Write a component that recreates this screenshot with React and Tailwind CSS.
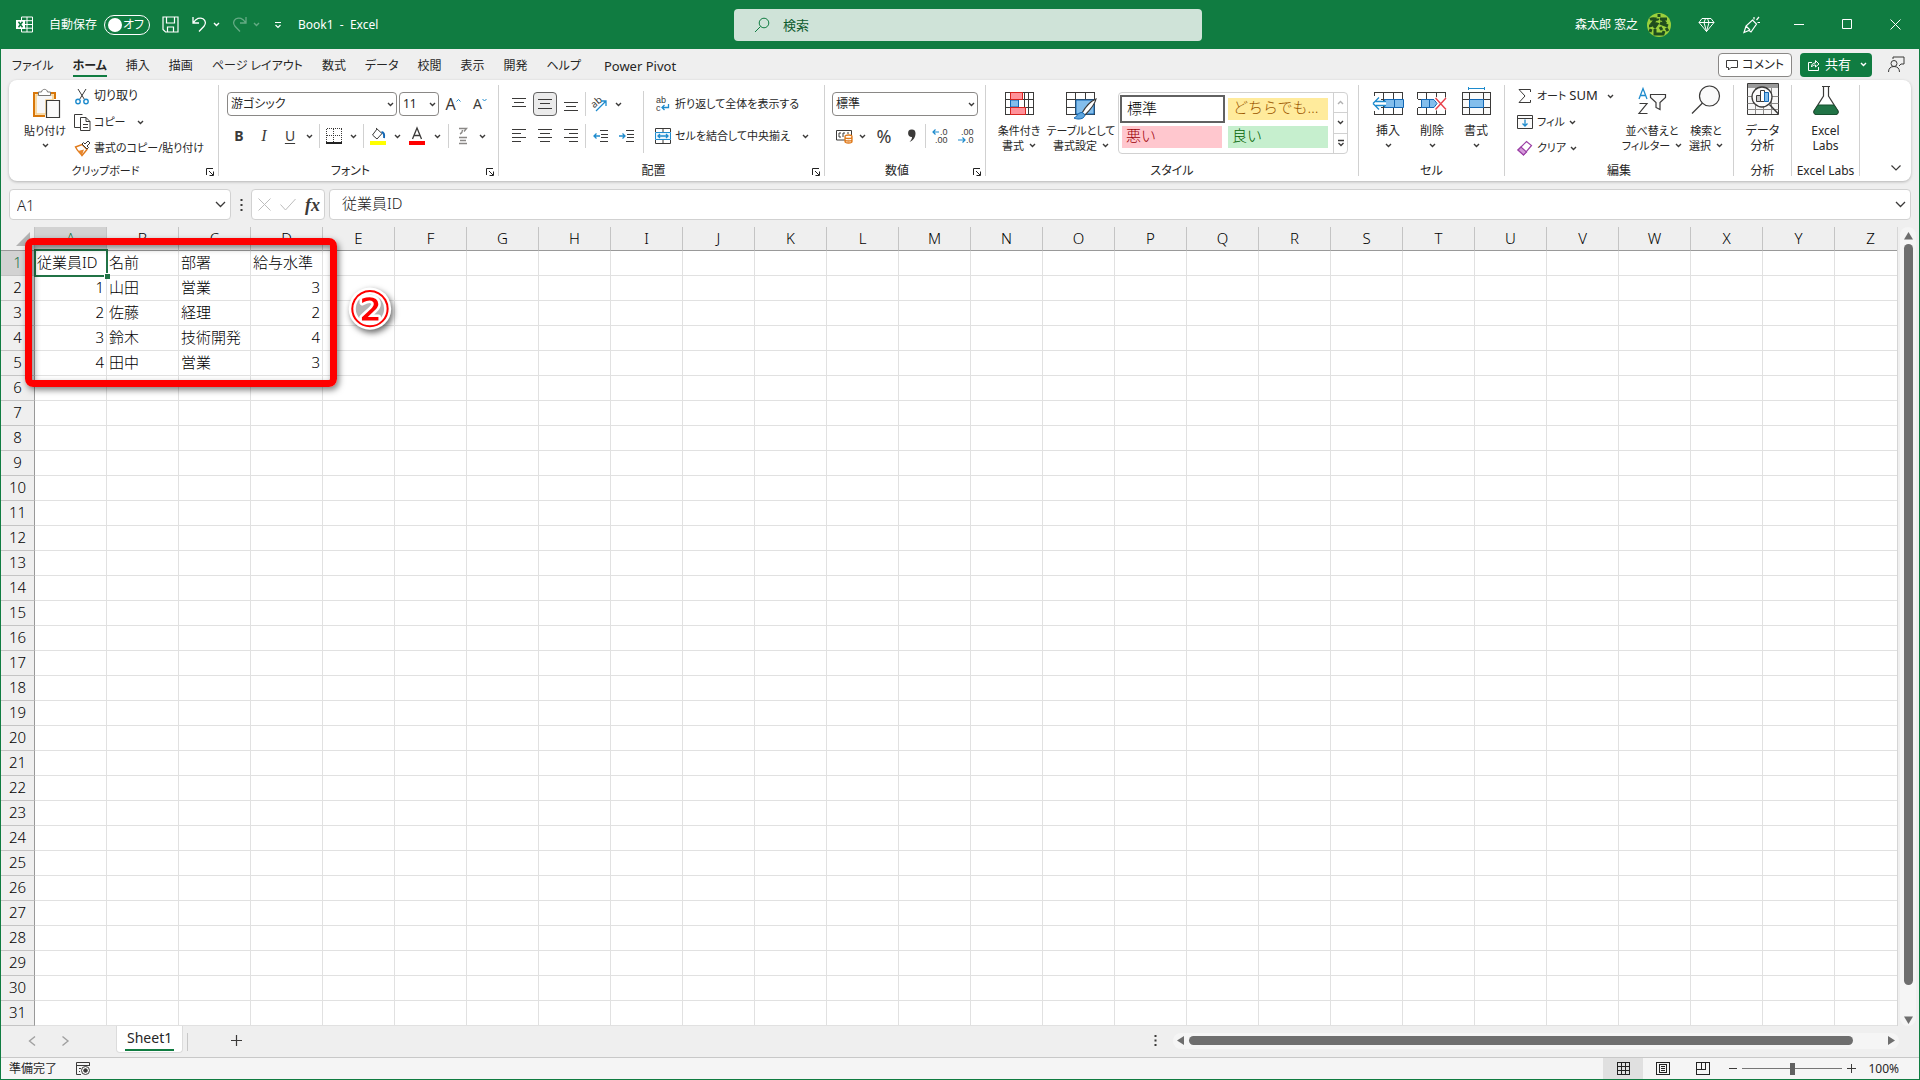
import React, { useState } from 'react';

const menuTabs = ['ファイル', 'ホーム', '挿入', '描画', 'ページ レイアウト', '数式', 'データ', '校閲', '表示', '開発', 'ヘルプ', 'Power Pivot'];

const columns = 'ABCDEFGHIJKLMNOPQRSTUVWXYZ'.split('');
const rows = Array.from({ length: 31 }, (_, i) => i + 1);

const sheet = [
  ['従業員ID', '名前', '部署', '給与水準'],
  [1, '山田', '営業', 3],
  [2, '佐藤', '経理', 2],
  [3, '鈴木', '技術開発', 4],
  [4, '田中', '営業', 3],
];

const BLUE = '#1e8bcd';
const INK = '#3b3a39';

function Icon({ w = 16, h = 16, children, className = '' }) {
  return (
    <svg width={w} height={h} viewBox={`0 0 ${w} ${h}`} fill="none" stroke={INK} className={`shrink-0 overflow-visible ${className}`} aria-hidden="true">
      {children}
    </svg>
  );
}

function Chevron({ className = '', color = INK }) {
  return (
    <svg width="7" height="5" viewBox="0 0 7 5" fill="none" stroke={color} strokeWidth="1.4" className={`shrink-0 ${className}`} aria-hidden="true">
      <path d="M1 1l2.5 2.5L6 1" />
    </svg>
  );
}

/* ---------- title bar ---------- */

function TitleBar() {
  const [autoSave, setAutoSave] = useState(false);

  return (
    <header className="grid grid-cols-[1fr_468px_1fr] items-center h-[49px] pl-4 bg-[#107c41] text-white text-xs">
      <div className="flex items-center">
        <Icon w={17} h={17}>
          <path d="M5.5 1h11v15h-11zM5.500 4.700h11M5.500 8.500h11M5.500 12.200h11M11 1v15" stroke="#fff" />
          <path d="M0 4h9v9H0z" fill="#fff" stroke="none" />
          <path d="M2.500 5.800l4 5.400M6.500 5.800l-4 5.400" stroke="#107c41" strokeWidth="1.500" />
        </Icon>
        <label className="relative flex items-center ml-4 gap-[7px]">
          自動保存
          <input type="checkbox" className="sr-only" checked={autoSave} onChange={() => setAutoSave(!autoSave)} />
          <span className="flex items-center justify-between w-[46px] h-5 pl-[3px] pr-[5px] rounded-full border border-white">
            <span className="w-[14px] h-[14px] rounded-full bg-white" />
            <span>オフ</span>
          </span>
        </label>
        <button aria-label="上書き保存" className="ml-3">
          <Icon w={17} h={17}><path d="M1 1h15v15H3.500L1 13.500zM4.500 1v6h8V1M5.500 16v-5h6v5" stroke="#fff" strokeWidth="1.200" /></Icon>
        </button>
        <button aria-label="元に戻す" className="flex items-center gap-[5px] ml-3">
          <Icon w={17} h={17}><path d="M2 1v6h6M2.500 6.500C5 2.500 9 1 12 2.800c3 2 3 5.200 1 7.400L8 15.500" stroke="#fff" strokeWidth="1.300" /></Icon>
          <Chevron color="#fff" />
        </button>
        <button aria-label="やり直し" className="flex items-center gap-[5px] ml-[11px] opacity-35">
          <Icon w={17} h={17}><path d="M15 1v6H9M14.500 6.500C12 2.500 8 1 5 2.800c-3 2-3 5.200-1 7.400l5 5.300" stroke="#fff" strokeWidth="1.300" /></Icon>
          <Chevron color="#fff" />
        </button>
        <button aria-label="クイック アクセス ツール バーのカスタマイズ" className="ml-[14px]">
          <Icon w={8} h={8}><path d="M1 1.500h6M1.500 4L4 6.500 6.500 4" stroke="#fff" strokeWidth="1.200" /></Icon>
        </button>
        <h1 className="ml-4 pt-px whitespace-pre">Book1  -  Excel</h1>
      </div>

      <label className="flex items-center h-8 rounded bg-[#cfe3d8] text-[#0e5c2f]">
        <Icon w={16} h={16} className="ml-5">
          <circle cx="10" cy="6" r="4.800" stroke="#107c41" />
          <path d="M6.500 9.500L1 15" stroke="#107c41" />
        </Icon>
        <input type="search" placeholder="検索" aria-label="検索" className="flex-1 ml-[13px] h-full outline-none text-[13px] placeholder:text-[#0e5c2f]" />
      </label>

      <div className="flex items-center justify-end pr-px">
        <button className="flex items-center gap-[9px]">
          森太郎 窓之
          <svg width="24" height="24" viewBox="0 0 24 24" aria-hidden="true">
            <circle cx="12" cy="12" r="12" fill="#9bd03c" />
            <g stroke="#1f4d1d" strokeWidth="3" fill="none">
              <path d="M12 1v3M3 6.500c4-2 8 1 8-1M9 6l-5 6M13 6h7M15 6l4 5M2 13c4 0 5-3 8-2l-3 4M13 10l8 3M4 16l-1 3M8 16v5h8l1-3M13 14l2 3M19 15l2 3" />
            </g>
          </svg>
        </button>
        <button aria-label="プレミアム" className="flex justify-center w-[46px] ml-3">
          <Icon w={17} h={16}><path d="M4 1.500h9l3 4-7.500 9-7.500-9zM1 5.500h15M6 5.500l2.500 9 2.500-9M6 5.500L7.500 1.500M11 5.500L9.500 1.500" stroke="#fff" /></Icon>
        </button>
        <button aria-label="ペン" className="flex justify-center w-[46px]">
          <Icon w={18} h={18}><path d="M1 16.500L3 10l6.500-6 4 4L8 16l-2-1.500zM3 10l4 4M11 3.500V1M13.500 4L16 1M14.500 6.500h2.500" stroke="#fff" strokeWidth="1.200" /></Icon>
        </button>
        <button aria-label="最小化" className="flex justify-center w-12"><Icon w={11} h={11}><path d="M0 5.500h10" stroke="#fff" /></Icon></button>
        <button aria-label="最大化" className="flex justify-center w-12"><Icon w={11} h={11}><path d="M.5.500h9v9h-9z" stroke="#fff" /></Icon></button>
        <button aria-label="閉じる" className="flex justify-center w-12"><Icon w={11} h={11}><path d="M.5.500l10 10M10.500.500l-10 10" stroke="#fff" /></Icon></button>
      </div>
    </header>
  );
}

/* ---------- menu tabs ---------- */

function MenuBar() {
  const [active, setActive] = useState('ホーム');

  return (
    <div className="flex items-center justify-between h-[31px] pl-[11px] pr-[14px] text-xs">
      <nav className="flex items-center gap-[19px]">
        {menuTabs.map((tab) => (
          <button
            key={tab}
            onClick={() => setActive(tab)}
            className={`h-6 pt-1 border-b-2 leading-[18px] whitespace-nowrap last:ml-1 last:text-[13px] ${active === tab ? 'border-[#107c41] font-bold' : 'border-transparent'}`}
          >
            {tab}
          </button>
        ))}
      </nav>
      <div className="flex items-center">
        <button className="flex items-center gap-1 h-6 px-[7px] rounded border border-[#8a8886] bg-white">
          <Icon w={12} h={12}><path d="M.5 1.500h11v7H5l-2.500 2.500V8.500h-2z" /></Icon>
          コメント
        </button>
        <button className="flex items-center gap-[5px] h-6 ml-2 pl-2 pr-[5px] rounded bg-[#107c41] text-white text-[13px]">
          <Icon w={12} h={12}><path d="M4 3.500H.5v8h10V8M3.500 8c0-3 1.500-4 4-4V1.500L11 5 7.500 8V6c-2 0-3 .5-4 2z" stroke="#fff" /></Icon>
          共有
          <Chevron color="#fff" className="ml-1" />
        </button>
        <button aria-label="フィードバック" className="ml-4">
          <Icon w={17} h={17}><circle cx="6" cy="7.500" r="3" /><path d="M.500 16c0-3.500 2-5.500 5.500-5.500S11.500 12.500 11.500 16M5 3V1h11v7h-3l-2 2" /></Icon>
        </button>
      </div>
    </div>
  );
}

/* ---------- ribbon ---------- */

function Group({ label, launcher, className, labelClass = '', children }) {
  return (
    <>
      <section className={`flex flex-col pt-[3px] shrink-0 ${className}`}>
        <div className="flex h-[78px]">{children}</div>
        <div className="flex items-center h-[18px]">
          <span className={`flex-1 pt-0.5 text-center whitespace-nowrap ${labelClass}`}>{label}</span>
          {launcher && (
            <button aria-label={`${label}の設定`} className="w-4 flex items-center justify-center pt-1">
              <Icon w={8} h={8}><path d="M.5 7V.5H7M3 3l4 4M7.500 3.500v4h-4" stroke="#222" /></Icon>
            </button>
          )}
        </div>
      </section>
      <div className="w-px my-[5px] bg-[#d1d1d1]" />
    </>
  );
}

function BigButton({ icon, lines, className = '' }) {
  return (
    <button className={`flex flex-col items-center justify-start shrink-0 leading-[15px] whitespace-nowrap ${className}`}>
      <span className="flex items-end h-9 pb-1 mb-1">{icon}</span>
      {lines.map((line, i) => (
        <span key={i} className="flex items-center justify-center gap-[5px] h-[15px]">{line}</span>
      ))}
    </button>
  );
}

function Tool({ label, children, className = 'w-6', pressed }) {
  return (
    <button
      aria-label={label}
      className={`flex items-center justify-center h-6 shrink-0 ${className} ${pressed ? 'rounded border border-[#616161] bg-[#ebebeb]' : ''}`}
    >
      {children}
    </button>
  );
}

const Sep = () => <div className="w-px h-6 shrink-0 bg-[#d1d1d1]" />;

function Lines({ d }) {
  return <Icon w={14} h={14}><path d={d} shapeRendering="crispEdges" /></Icon>;
}

function SelectBox({ label, options, className }) {
  return (
    <div className={`relative ${className}`}>
      <select aria-label={label} className="w-full h-6 pl-[3px] appearance-none rounded border border-[#8a8886] bg-white outline-none">
        {options.map((o) => <option key={o}>{o}</option>)}
      </select>
      <Chevron className="absolute right-[3px] top-[10px] pointer-events-none" />
    </div>
  );
}

function ClipboardGroup() {
  return (
    <Group label="クリップボード" launcher className="w-[209px]" labelClass="text-[11px]">
      <BigButton
        className="w-[54px] ml-[9px] text-[11px]"
        lines={['貼り付け', <Chevron />]}
        icon={
          <Icon w={27} h={31} className="-mb-1">
            <path d="M7 5H2v23h11M18 5h5v6" stroke="#d8770a" strokeWidth="2" />
            <path d="M4 7h17v5h-7v14H4z" fill="#f7f7f8" stroke="#f7d08a" strokeWidth="1.500" />
            <path d="M6.500 7.500V4h3c.3-3.500 5.700-3.500 6 0h3v3.500z" fill="#fff" stroke="#797775" />
            <path d="M14.500 12.500h13v17h-13z" fill="#fafafa" strokeWidth="1.200" />
          </Icon>
        }
      />
      <div className="flex flex-col pl-0.5">
        <button className="flex items-center gap-1 h-[26px]">
          <Icon w={16} h={17}>
            <path d="M4 1l6.500 10.500M12 1L5.500 11.500" />
            <circle cx="4" cy="13.500" r="2.200" stroke={BLUE} strokeWidth="1.400" />
            <circle cx="12" cy="13.500" r="2.200" stroke={BLUE} strokeWidth="1.400" />
          </Icon>
          切り取り
        </button>
        <button className="flex items-center gap-[3px] h-[26px] text-[11px]">
          <Icon w={17} h={17}>
            <path d="M6 13.500H.5v-13h8" /><path d="M6.500 3.500H12l4 4v9H6.500zM12 3.500v4h4M9 10.500h5M9 13.500h5" fill="#fff" />
          </Icon>
          コピー
          <Chevron className="ml-2" />
        </button>
        <button className="flex items-center gap-[3px] h-[26px] whitespace-nowrap text-[11px]">
          <Icon w={17} h={17}>
            <path d="M1.500 7L8 4.500l5 5L8 15.500C5.500 12 4 12 1.500 7z" fill="#fff" stroke="#e07a1b" strokeWidth="1.400" />
            <path d="M4 11l6-1.500L8 15z" fill="#e8862c" stroke="none" />
            <path d="M8 4l5 5 1.500-1.500-1.500-1.500L16 3l-2-2-3 3-1.500-1.500z" fill="#fff" />
          </Icon>
          書式のコピー/貼り付け
        </button>
      </div>
    </Group>
  );
}

function FontGroup() {
  return (
    <Group label="フォント" launcher className="w-[279px]">
      <div className="flex flex-col gap-2 pt-[9px] pl-2">
        <div className="flex items-center">
          <SelectBox label="フォント名" options={['游ゴシック']} className="w-[170px]" />
          <SelectBox label="フォント サイズ" options={['11']} className="w-10 ml-0.5" />
          <Tool label="フォント サイズの拡大" className="w-6 ml-0.5">
            <span className="text-base leading-5 text-[#3b3a39]">A</span>
            <Icon w={5} h={12}><path d="M.5 3.500l2-2 2 2" stroke={BLUE} /></Icon>
          </Tool>
          <Tool label="フォント サイズの縮小" className="w-6 ml-[3px]">
            <span className="text-sm leading-5 text-[#3b3a39]">A</span>
            <Icon w={5} h={12}><path d="M.5 1l2 2 2-2" stroke={BLUE} /></Icon>
          </Tool>
        </div>
        <div className="flex items-center">
          <Tool label="太字"><b className="text-sm text-[#3b3a39]">B</b></Tool>
          <Tool label="斜体" className="w-[26px]"><i className="font-['Liberation_Serif',serif] text-base text-[#3b3a39]">I</i></Tool>
          <Tool label="下線" className="w-[26px]"><u className="text-sm text-[#3b3a39] underline-offset-2">U</u></Tool>
          <Tool label="下線の種類" className="w-3"><Chevron /></Tool>
          <div className="w-1" />
          <Sep />
          <Tool label="罫線" className="w-[27px]">
            <Icon w={16} h={16}>
              <path d="M.5.500h15M.5 7.500h15M.5.500v14M7.500.500v14M15.500.500v14" strokeDasharray="1 1" shapeRendering="crispEdges" />
              <path d="M0 15h16" strokeWidth="2" stroke="#222" />
            </Icon>
          </Tool>
          <Tool label="罫線の種類" className="w-3"><Chevron /></Tool>
          <div className="w-1" />
          <Sep />
          <Tool label="塗りつぶしの色" className="w-[27px]">
            <Icon w={16} h={18}>
              <path d="M7 2L2.500 8 7 12l5-5.500L6 1" />
              <path d="M11.500 5c2.500.5 3 3 2.500 6" stroke="#1267b4" strokeWidth="2" />
              <path d="M0 14h16v4H0z" fill="#ff0" stroke="none" />
            </Icon>
          </Tool>
          <Tool label="塗りつぶしの色を選択" className="w-3"><Chevron /></Tool>
          <Tool label="フォントの色" className="w-7">
            <Icon w={16} h={18}>
              <path d="M3.500 12L8 1l4.500 11M5 8.500h6" strokeWidth="1.300" />
              <path d="M0 14h16v4H0z" fill="#f00" stroke="none" />
            </Icon>
          </Tool>
          <Tool label="フォントの色を選択" className="w-3"><Chevron /></Tool>
          <div className="w-[5px]" />
          <Sep />
          <Tool label="ふりがなの表示" className="w-[27px]">
            <Icon w={10} h={18}>
              <path d="M1 1.500h7.500L6 4.500M4.500 3c0 2-.5 3-2.500 4M1 10.500h8M2 13.500h6M1 16.500h8" stroke="#8a8886" strokeWidth="1.400" />
            </Icon>
          </Tool>
          <Tool label="ふりがなの設定" className="w-3"><Chevron /></Tool>
        </div>
      </div>
    </Group>
  );
}

function AlignGroup() {
  return (
    <Group label="配置" launcher className="w-[325px]">
      <div className="flex flex-col gap-2 pt-[9px] pl-2">
        <div className="flex items-center gap-0.5">
          <Tool label="上揃え"><Lines d="M0 1.500h14M2 5.500h10M0 9.500h14" /></Tool>
          <Tool label="上下中央揃え" pressed><Lines d="M0 2.500h14M2 6.500h10M0 11.500h14" /></Tool>
          <Tool label="下揃え"><Lines d="M0 5.500h14M2 9.500h10M0 13.500h14" /></Tool>
          <Sep />
          <Tool label="方向" className="w-[22px]">
            <Icon w={18} h={16}>
              <text x="2" y="11" fontSize="10" fill={INK} stroke="none" transform="rotate(-40 5 9)">ab</text>
              <path d="M6 15L15.500 5.500M11 5h5v5" stroke={BLUE} strokeWidth="1.300" />
            </Icon>
          </Tool>
          <Tool label="方向の種類" className="w-3"><Chevron /></Tool>
        </div>
        <div className="flex items-center gap-0.5">
          <Tool label="左揃え"><Lines d="M0 .5h14M0 4.500h9M0 8.500h14M0 12.500h9" /></Tool>
          <Tool label="中央揃え"><Lines d="M0 .5h14M2 4.500h10M0 8.500h14M2 12.500h10" /></Tool>
          <Tool label="右揃え"><Lines d="M0 .5h14M5 4.500h9M0 8.500h14M5 12.500h9" /></Tool>
          <Sep />
          <Tool label="インデントを減らす">
            <Icon w={15} h={14}><path d="M7 1.500h8M8 5.500h7M8 8.500h7M7 12.500h8" /><path d="M1 7h6M3.500 4.500L1 7l2.500 2.500" stroke={BLUE} strokeWidth="1.300" /></Icon>
          </Tool>
          <Tool label="インデントを増やす">
            <Icon w={15} h={14}><path d="M7 1.500h8M8 5.500h7M8 8.500h7M7 12.500h8" /><path d="M0 7h6M3.500 4.500L6 7 3.500 9.500" stroke={BLUE} strokeWidth="1.300" /></Icon>
          </Tool>
        </div>
      </div>
      <div className="w-px h-[62px] mt-2 ml-[5px] bg-[#d1d1d1]" />
      <div className="flex flex-col gap-2 pt-[9px] pl-[11px]">
        <button className="flex items-center gap-1 h-6 whitespace-nowrap text-[11px]">
          <Icon w={16} h={16}>
            <g fontSize="9" fill={INK} stroke="none" className="font-['Liberation_Sans',sans-serif]">
              <text x="1" y="7">ab</text>
              <text x="1" y="15">c</text>
            </g>
            <path d="M13.500 8v3.500H7M9.500 9L7 11.500 9.500 14" stroke={BLUE} strokeWidth="1.300" />
          </Icon>
          折り返して全体を表示する
        </button>
        <button className="flex items-center gap-1 h-6 whitespace-nowrap text-[11px]">
          <Icon w={16} h={16}>
            <path d="M.5 4V.500h15V4M.5 12v3.500h15V12M8 .500V4M8 12v3.500" />
            <path d="M.5 4.500h15v7H.5z" fill="#eaf4fb" stroke={BLUE} />
            <path d="M3 8h10M5 6L3 8l2 2M11 6l2 2-2 2" stroke={BLUE} strokeWidth="1.300" />
          </Icon>
          セルを結合して中央揃え
          <Chevron className="ml-2" />
        </button>
      </div>
    </Group>
  );
}

function NumberGroup() {
  return (
    <Group label="数値" launcher className="w-[160px]">
      <div className="flex flex-col gap-2 pt-[9px] pl-[7px]">
        <SelectBox label="表示形式" options={['標準']} className="w-[146px]" />
        <div className="flex items-center">
          <Tool label="通貨表示形式">
            <Icon w={17} h={16}>
              <path d="M9 12H.5V2.500h15V7M5 5H3v4h2M7 9V5h2M11 5h2" />
              <path d="M9 8.500c0-2 7-2 7 0v5c0 2-7 2-7 0zM9 9c0 2 7 2 7 0M9 11.500c0 2 7 2 7 0" fill="#fff" stroke="#e07a1b" strokeWidth="1.300" />
            </Icon>
          </Tool>
          <Tool label="通貨の種類" className="w-3"><Chevron /></Tool>
          <Tool label="パーセント スタイル" className="w-8"><span className="text-lg leading-5 text-[#3b3a39]">%</span></Tool>
          <Tool label="桁区切りスタイル" className="w-[22px]">
            <Icon w={9} h={14}><path d="M8.500 4c0 4-2 7.500-6 9 2-2 2.500-3.500 2.500-5A3.700 3.700 0 1 1 8.500 4z" fill={INK} stroke="none" /></Icon>
          </Tool>
          <div className="w-[3px]" />
          <Sep />
          <Tool label="小数点以下の表示桁数を増やす" className="w-7">
            <Icon w={16} h={16}>
              <g fontSize="9" fill={INK} stroke="none" className="font-['Liberation_Sans',sans-serif]">
                <text x="8" y="7">.0</text>
                <text x="3" y="15">.00</text>
              </g>
              <path d="M1 4h6M3.500 1.500L1 4l2.500 2.500" stroke={BLUE} strokeWidth="1.200" />
            </Icon>
          </Tool>
          <Tool label="小数点以下の表示桁数を減らす">
            <Icon w={16} h={16}>
              <g fontSize="9" fill={INK} stroke="none" className="font-['Liberation_Sans',sans-serif]">
                <text x="3" y="7">.00</text>
                <text x="8" y="15">.0</text>
              </g>
              <path d="M0 12h7M4.500 9.500L7 12l-2.500 2.500" stroke={BLUE} strokeWidth="1.200" />
            </Icon>
          </Tool>
        </div>
      </div>
    </Group>
  );
}

function StylesGroup() {
  return (
    <Group label="スタイル" className="w-[372px]">
      <BigButton
        className="w-[60px] ml-[3px] text-[11px]"
        lines={['条件付き', <>書式 <Chevron /></>]}
        icon={
          <Icon w={29} h={23}>
            <path d="M.5.500h28v22H.5zM.5 7.500h28M.5 15.500h28M5.500.500v22M19.500.500v22M23.500.500v22" shapeRendering="crispEdges" />
            <path d="M5.500 8h8v7h-8z" fill="#83beec" stroke="#1267b4" />
            <path d="M5.500.500h12v7h-12zM5.500 15.500h15v7h-15z" fill="#ff9199" stroke="#d8231f" />
          </Icon>
        }
      />
      <BigButton
        className="w-[64px] text-[11px]"
        lines={['テーブルとして', <>書式設定 <Chevron /></>]}
        icon={
          <Icon w={31} h={28} className="-mb-[5px]">
            <path d="M.5.500h28v22H.5zM.5 7.500h28M.5 15.500h28M9.500.500v22M19.500.500v22" shapeRendering="crispEdges" />
            <path d="M10 8h18v14H10z" fill="#83beec" stroke="#1267b4" />
            <path d="M16 21C20 14 25 9 30 7c-1 5-6 11-11 16z" fill="#fff" strokeWidth="1.200" />
            <path d="M8 26c3-.5 3-5 7-5.500 3 0 4.500 2.500 3 4.500-2 2.500-7 2.500-10 1z" fill="#5ea5dd" stroke="#1267b4" />
          </Icon>
        }
      />
      <div className="flex mt-[9px] ml-[5px] w-[230px] h-[62px] rounded border border-[#d1d1d1]">
        <div className="flex-1 grid grid-cols-[105px_100px] gap-x-[3px] content-start pt-0.5 pl-px text-[15px] leading-[18px] font-light [font-feature-settings:normal]">
          <button className="h-7 pl-[5px] pb-0.5 text-left border-2 border-[#616161] bg-white text-black">標準</button>
          <button className="self-center h-[22px] pl-[5px] pb-1 text-left bg-[#ffeb9c] text-[#9c5700] whitespace-nowrap">どちらでも…</button>
          <button className="h-[22px] mt-[3px] ml-0.5 mr-[3px] pl-1 pb-1 text-left bg-[#ffc7ce] text-[#9c0006]">悪い</button>
          <button className="h-[22px] mt-[3px] pl-1 pb-1 text-left bg-[#c6efce] text-[#006100]">良い</button>
        </div>
        <div className="flex flex-col w-[14px] border-l border-[#d1d1d1] divide-y divide-[#d1d1d1]">
          <button aria-label="前のスタイル" className="flex flex-1 items-center justify-center"><Chevron className="rotate-180" color="#b0b0b0" /></button>
          <button aria-label="次のスタイル" className="flex flex-1 items-center justify-center"><Chevron /></button>
          <button aria-label="スタイル一覧" className="flex flex-1 items-center justify-center">
            <Icon w={8} h={8}><path d="M1 1.500h6M1.500 4L4 6.500 6.500 4" strokeWidth="1.300" /></Icon>
          </button>
        </div>
      </div>
    </Group>
  );
}

function CellsGroup() {
  return (
    <Group label="セル" className="w-[145px]">
      <BigButton
        className="w-[44px] ml-[7px]"
        lines={['挿入', <Chevron />]}
        icon={
          <Icon w={32} h={23}>
            <path d="M2.500.500h28v22h-28zM2.500 7.500h28M2.500 15.500h28M11.500.500v22M21.500.500v22" shapeRendering="crispEdges" />
            <path d="M0 4h9v15H0z" fill="#fff" stroke="none" />
            <path d="M12.500 7.500h19v8h-19zM22.500 7.500v8" fill="#83beec" stroke="#1267b4" />
            <path d="M14 9.500H5v4h9z" fill="#fff" stroke="none" />
            <path d="M14 9.500H3.500M14 13.500H3.500M1 11.500L7 5.500M1 11.500l6 6" stroke={BLUE} strokeWidth="1.300" />
          </Icon>
        }
      />
      <BigButton
        className="w-[44px]"
        lines={['削除', <Chevron />]}
        icon={
          <Icon w={30} h={23}>
            <path d="M.5 7V.500h28V7M.5 16v6.500h28V16M9.500.500V7M19.500.500V7M9.500 16v6.500M19.500 16v6.500M.5 7.500H5M.5 15.500H5" shapeRendering="crispEdges" />
            <path d="M4.500 7.500H17l3 4-3 4H4.500zM12.500 7.500v8" fill="#83beec" stroke="#1267b4" />
            <path d="M18.500 6L29 17.500M29 6L18.500 17.500" stroke="#fff" strokeWidth="3.500" />
            <path d="M18.500 6L29 17.500M29 6L18.500 17.500" stroke="#e8404a" strokeWidth="1.400" />
          </Icon>
        }
      />
      <BigButton
        className="w-[44px]"
        lines={['書式', <Chevron />]}
        icon={
          <Icon w={29} h={28}>
            <path d="M6.500 1.500h16M6.500 0v3M22.500 0v3" stroke={BLUE} />
            <path d="M.5 5.500h28v22H.5zM.5 12.500h28M.5 20.500h28M7.500 5.500v22M21.500 5.500v22" fill="#fafafa" shapeRendering="crispEdges" />
            <path d="M7.500 12.500h14v8h-14z" fill="#83beec" stroke="#1267b4" />
          </Icon>
        }
      />
    </Group>
  );
}

function EditGroup() {
  return (
    <Group label="編集" className="w-[228px]">
      <div className="flex flex-col w-[109px] pl-3">
        <button className="flex items-center h-[26px] gap-1 whitespace-nowrap text-[11px]">
          <Icon w={16} h={16}><path d="M13.500 4V1.500H2L8 8l-6 6.500h11.500V12" /></Icon>
          <span>オート <span className="text-[13px]">SUM</span></span>
          <Chevron className="ml-auto" />
        </button>
        <button className="flex items-center h-[26px] gap-1 text-[11px]">
          <Icon w={16} h={16}><path d="M.5 1.500h15v13H.5zM.5 4.500h15" fill="#fafafa" /><path d="M8 5.500v7M5.500 9.500L8 12l2.500-2.500" stroke={BLUE} strokeWidth="1.300" /></Icon>
          フィル
          <Chevron />
        </button>
        <button className="flex items-center h-[26px] gap-1 text-[11px]">
          <Icon w={16} h={16}>
            <path d="M1 10l8.500-8.500 5 4L6.500 15z" fill="#fff" stroke="#9b3fa5" strokeWidth="1.200" />
            <path d="M1 10l3-3 5.500 5L6.500 15z" fill="#d59adb" stroke="#9b3fa5" strokeWidth="1.200" />
          </Icon>
          クリア
          <Chevron />
        </button>
      </div>
      <BigButton
        className="w-[60px] ml-2 text-[11px]"
        lines={['並べ替えと', <>フィルター <Chevron /></>]}
        icon={
          <Icon w={29} h={28}>
            <path d="M1 12L5 1.500 9 12M2.500 8.500h5" stroke={BLUE} strokeWidth="1.300" />
            <path d="M1.500 16.500H9l-8 10h8.500" strokeWidth="1.200" />
            <path d="M12.500 7.500h15v3l-5.500 5v7l-4-2v-5l-5.500-5z" fill="#fafafa" strokeWidth="1.200" />
          </Icon>
        }
      />
      <BigButton
        className="w-[48px] text-[11px]"
        lines={['検索と', <>選択 <Chevron /></>]}
        icon={
          <Icon w={30} h={30}>
            <circle cx="18.500" cy="11" r="10" fill="#fafafa" strokeWidth="1.200" />
            <path d="M11.500 18L1 28.500" strokeWidth="1.200" />
          </Icon>
        }
      />
    </Group>
  );
}

function Ribbon() {
  return (
    <div className="flex h-[101px] mx-2 rounded-lg bg-white shadow-[0_1px_3px_rgba(0,0,0,0.25)] text-xs">
      <ClipboardGroup />
      <FontGroup />
      <AlignGroup />
      <NumberGroup />
      <StylesGroup />
      <CellsGroup />
      <EditGroup />
      <Group label="分析" className="w-[57px]">
        <BigButton
          className="w-[57px]"
          lines={['データ', '分析']}
          icon={
            <Icon w={32} h={32}>
              <path d="M.5.500h31v31H.5z" fill="#f7f7f7" />
              <path d="M1 3h30" stroke="#9a9a9a" strokeWidth="4" />
              <path d="M.5 13.500h31M.5 20.500h31M.5 26.500h31M8.500 5v26M16.500 5v26M24.500 5v26" stroke="#8a8886" />
              <circle cx="15" cy="14" r="10" fill="#fafafa" strokeWidth="1.300" />
              <path d="M22.500 21.500l9 9.500" strokeWidth="1.500" />
              <path d="M9.500 12.500h4v6h-4z" fill="#c8c8c8" />
              <path d="M13.500 7.500h4v11h-4z" fill="#fff" />
              <path d="M17.500 9.500h4v9h-4z" fill="#83beec" stroke="#1267b4" />
            </Icon>
          }
        />
      </Group>
      <Group label="Excel Labs" className="w-[67px]">
        <BigButton
          className="w-[67px]"
          lines={['Excel', 'Labs']}
          icon={
            <Icon w={26} h={29}>
              <path d="M9 .5h8M10.500.500V10L1 25c-.5 2 .5 3.500 2.500 3.500h19c2 0 3-1.500 2.500-3.500l-9.500-15V.500" fill="#fff" strokeWidth="1.200" />
              <path d="M5 19h16l4 6c.5 2-.5 3.500-2.500 3.500h-19C1.500 28.500.5 27 1 25z" fill="#217346" stroke="#17512f" />
            </Icon>
          }
        />
      </Group>
      <button aria-label="リボンを折りたたむ" className="ml-auto mt-auto mb-[10px] mr-[10px]">
        <Icon w={10} h={6}><path d="M.5.500L5 5 9.500.500" strokeWidth="1.200" /></Icon>
      </button>
    </div>
  );
}

/* ---------- formula bar ---------- */

function FormulaBar() {
  return (
    <div className="flex h-[31px] mt-2 mb-[7px] mx-2 text-[15px] font-light">
      <div className="flex items-center w-[222px] h-full pr-1 rounded border border-[#d1d1d1] bg-white">
        <input aria-label="名前ボックス" defaultValue="A1" className="flex-1 min-w-0 pl-[7px] pt-0.5 outline-none" />
        <button aria-label="名前の一覧">
          <Icon w={11} h={7}><path d="M1 1l4.500 4.500L10 1" strokeWidth="1.300" /></Icon>
        </button>
      </div>
      <div className="flex items-center justify-center w-5">
        <Icon w={3} h={12}><path d="M.5 1h2M.5 6h2M.5 11h2" strokeWidth="2" /></Icon>
      </div>
      <div className="flex items-center justify-between w-[74px] h-full pl-[6px] pr-1 rounded border border-[#d1d1d1] bg-white">
        <button aria-label="キャンセル"><Icon w={13} h={13}><path d="M.5.500l12 12M12.500.500l-12 12" stroke="#bdbdbd" /></Icon></button>
        <button aria-label="入力"><Icon w={16} h={13}><path d="M.5 6.500l5 5.500L15.500 1" stroke="#bdbdbd" /></Icon></button>
        <button aria-label="関数の挿入" className="font-['Liberation_Serif',serif] italic font-bold text-lg leading-5 text-[#3b3a39]">fx</button>
      </div>
      <div className="flex items-center flex-1 h-full ml-1 pr-1 rounded border border-[#d1d1d1] bg-white">
        <input aria-label="数式バー" defaultValue="従業員ID" className="flex-1 pl-3 pb-0.5 outline-none text-[#222]" />
        <button aria-label="数式バーの展開">
          <Icon w={11} h={7}><path d="M1 1l4.500 4.500L10 1" strokeWidth="1.300" /></Icon>
        </button>
      </div>
    </div>
  );
}

/* ---------- worksheet ---------- */

function Grid() {
  return (
    <div className="relative flex-1 min-w-0 overflow-hidden border-r border-[#d6d6d6]">
      <table className="w-[1906px] table-fixed border-separate border-spacing-0 bg-white text-[15px] leading-5 font-light text-black [font-feature-settings:normal]">
        <thead>
          <tr className="h-6 bg-[#efefef]">
            <th className="w-[34px] p-0 border-r border-b border-[#999] border-r-[#c4c4c4]">
              <Icon w={16} h={16} className="ml-[14px]"><path d="M15 1v14H1z" fill="#b3b3b3" stroke="none" /></Icon>
            </th>
            {columns.map((c) => (
              <th
                key={c}
                scope="col"
                className={`w-[72px] p-0 pb-0.5 border-r border-b border-b-[#999] border-r-[#c4c4c4] font-light ${c === 'A' ? 'bg-[#d2d2d2] text-[#217346]' : ''}`}
              >
                {c}
              </th>
            ))}
          </tr>
        </thead>
        <tbody>
          {rows.map((r) => (
            <tr key={r} className="h-[25px]">
              <th
                scope="row"
                className={`p-0 pb-0.5 border-r border-b border-r-[#999] border-b-[#c4c4c4] font-light ${r === 1 ? 'bg-[#d2d2d2] text-[#217346]' : 'bg-[#efefef]'}`}
              >
                {r}
              </th>
              {columns.map((c, i) => {
                const value = sheet[r - 1]?.[i];
                return (
                  <td
                    key={c}
                    className={`p-0 px-0.5 pb-0.5 border-r border-b border-[#e1e1e1] whitespace-nowrap ${typeof value === 'number' ? 'text-right' : ''}`}
                  >
                    {value}
                  </td>
                );
              })}
            </tr>
          ))}
        </tbody>
      </table>

      {/* active cell */}
      <div className="absolute left-[33px] top-[22px] w-[74px] h-[28px] border-2 border-[#217346]">
        <div className="absolute -right-[4px] -bottom-[4px] w-[6px] h-[6px] border-t border-l border-white bg-[#217346]" />
      </div>

      {/* step marker */}
      <div className="absolute left-6 top-[11px] w-[312px] h-[149px] rounded-lg border-[7px] border-[#fe0000] shadow-[2px_3px_6px_rgba(0,0,0,0.5),inset_2px_3px_6px_rgba(0,0,0,0.45)]" />
      <svg width="64" height="64" viewBox="0 0 64 64" className="absolute left-[337px] top-[51px] drop-shadow-[2px_3px_3px_rgba(0,0,0,0.6)]">
        <circle cx="32" cy="32" r="18" fill="#b4b4b4" />
        <text
          x="32"
          y="49"
          textAnchor="middle"
          fontSize="50"
          fill="#fe0000"
          stroke="#fff"
          strokeWidth="5"
          strokeLinejoin="round"
          className="[paint-order:stroke] font-['DejaVu_Sans',sans-serif]"
        >
          ②
        </text>
      </svg>
    </div>
  );
}

function VerticalScroll() {
  return (
    <div className="flex flex-col items-center w-4 ml-0.5 mr-[3px] pt-[5px] pb-0.5 rounded-full bg-[#f5f5f5]">
      <button aria-label="上へスクロール"><Icon w={9} h={8}><path d="M4.500 0L9 7.500H0z" fill="#6e6e6e" stroke="none" /></Icon></button>
      <div className="w-[9px] flex-1 mt-1 mb-[31px] rounded-full bg-[#6e6e6e]" />
      <button aria-label="下へスクロール"><Icon w={9} h={8}><path d="M4.500 8L9 .500H0z" fill="#6e6e6e" stroke="none" /></Icon></button>
    </div>
  );
}

function SheetBar() {
  return (
    <div className="flex h-[31px] pl-[27px] pr-5 bg-[#efefef]">
      <button aria-label="前のシート" className="mb-0.5"><Icon w={9} h={10}><path d="M7 .5L1.500 5 7 9.500" stroke="#a0a0a0" strokeWidth="1.400" /></Icon></button>
      <button aria-label="次のシート" className="mb-0.5 ml-6"><Icon w={9} h={10}><path d="M1.500.500L7 5 1.500 9.500" stroke="#a0a0a0" strokeWidth="1.400" /></Icon></button>
      <button className="h-[27px] px-2 ml-[46px] rounded-b bg-white border-x border-b border-[#dcdcdc] text-sm">
        <span className="block h-6 leading-[22px] px-0.5 border-b-2 border-[#107c41]">Sheet1</span>
      </button>
      <div className="w-px h-[18px] mt-[7px] ml-1 bg-[#c8c8c8]" />
      <button aria-label="新しいシート" className="mb-0.5 ml-[43px]"><Icon w={11} h={11}><path d="M5.500 0v11M0 5.500h11" strokeWidth="1.200" /></Icon></button>
      <div className="flex items-center gap-4 mb-0.5 ml-auto w-[745px]">
        <Icon w={3} h={11}><path d="M.5 1h2M.5 5.500h2M.5 10h2" strokeWidth="2" /></Icon>
        <div className="flex items-center flex-1 h-4 px-1 rounded-full bg-[#f5f5f5]">
          <button aria-label="左へスクロール"><Icon w={8} h={9}><path d="M0 4.500L7 0v9z" fill="#6e6e6e" stroke="none" /></Icon></button>
          <div className="flex-1 h-[9px] ml-1 mr-[34px] rounded-full bg-[#6e6e6e]" />
          <button aria-label="右へスクロール"><Icon w={8} h={9}><path d="M8 4.500L1 0v9z" fill="#6e6e6e" stroke="none" /></Icon></button>
        </div>
      </div>
    </div>
  );
}

function StatusBar() {
  const [zoom, setZoom] = useState(100);

  return (
    <footer className="flex items-center h-[22px] pl-2 pr-5 border-t border-[#c8c8c8] bg-[#f5f5f5] text-xs">
      <span>準備完了</span>
      <button aria-label="マクロの記録" className="ml-[19px]">
        <Icon w={15} h={13}>
          <path d="M5 12.500H.5V.500h13V4M.5 3.500h13M3 6.500h2M3 9.500h1" />
          <circle cx="9.500" cy="8.500" r="4" fill="#fff" /><circle cx="9.500" cy="8.500" r="1.800" fill={INK} />
        </Icon>
      </button>
      <div className="flex items-center h-full ml-auto">
        <button aria-label="標準" className="flex items-center justify-center w-10 h-full bg-[#e0e0e0]">
          <Icon w={13} h={13}><path d="M.5.500h12v12H.5zM.5 4.500h12M.5 8.500h12M4.500.500v12M8.500.500v12" stroke="#222" shapeRendering="crispEdges" /></Icon>
        </button>
        <button aria-label="ページ レイアウト" className="flex items-center justify-center w-10 h-full">
          <Icon w={14} h={13}><path d="M.5.500h13v12H.5zM3.500 2.500h7v8h-7zM5 4.500h4M5 6.500h4M5 8.500h4" stroke="#222" shapeRendering="crispEdges" /></Icon>
        </button>
        <button aria-label="改ページ プレビュー" className="flex items-center justify-center w-10 h-full">
          <Icon w={14} h={13}><path d="M.5.500h13v12H.5zM5.500.500v7M9.500.500v7M.5 7.500h9" stroke="#222" shapeRendering="crispEdges" /></Icon>
        </button>
        <button aria-label="縮小" className="ml-[6px]"><Icon w={8} h={9}><path d="M0 4.500h8" /></Icon></button>
        <input
          type="range"
          aria-label="ズーム"
          min="0"
          max="200"
          value={zoom}
          onChange={(e) => setZoom(e.target.value)}
          className="w-[100px] h-3 ml-[5px] mr-[5px] appearance-none bg-[linear-gradient(#767676,#767676)] bg-[length:100%_1px] bg-center bg-no-repeat [&::-webkit-slider-thumb]:appearance-none [&::-webkit-slider-thumb]:w-[5px] [&::-webkit-slider-thumb]:h-3 [&::-webkit-slider-thumb]:bg-[#616161]"
        />
        <button aria-label="拡大"><Icon w={9} h={9}><path d="M0 4.500h9M4.500 0v9" /></Icon></button>
        <span className="ml-3">{zoom}%</span>
      </div>
    </footer>
  );
}

export default function App() {
  return (
    <div className="flex flex-col min-h-screen overflow-hidden bg-[#efefef] text-[#262626] font-['Noto_Sans','Noto_Sans_CJK_JP',sans-serif] [font-feature-settings:'palt']">
      <TitleBar />
      <div className="flex flex-col flex-1 border-x border-b border-[#107c41]">
        <MenuBar />
        <Ribbon />
        <FormulaBar />
        <main className="flex flex-1">
          <Grid />
          <VerticalScroll />
        </main>
        <SheetBar />
        <StatusBar />
      </div>
    </div>
  );
}
